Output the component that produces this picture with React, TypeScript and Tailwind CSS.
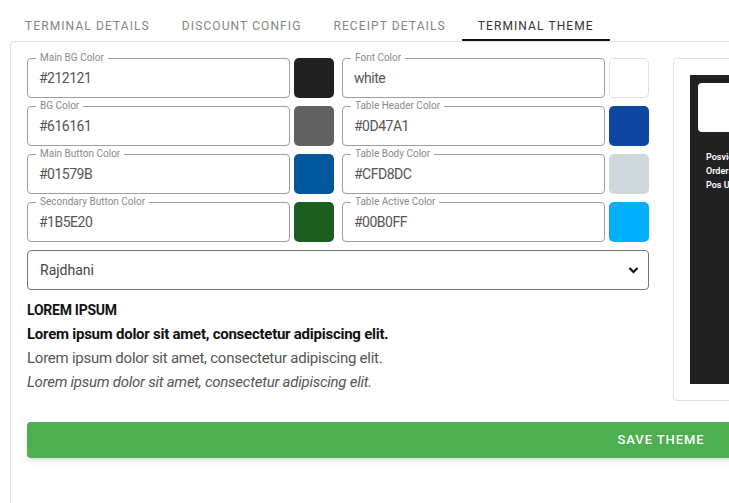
import React from "react";

const FONT = "font-['Roboto',sans-serif]";

const fields = [
  { label: "Main BG Color", value: "#212121", swatch: "bg-[#212121]" },
  { label: "Font Color", value: "white", swatch: "bg-white border border-[#e0e0e0]" },
  { label: "BG Color", value: "#616161", swatch: "bg-[#616161]" },
  { label: "Table Header Color", value: "#0D47A1", swatch: "bg-[#0D47A1]" },
  { label: "Main Button Color", value: "#01579B", swatch: "bg-[#01579B]" },
  { label: "Table Body Color", value: "#CFD8DC", swatch: "bg-[#CFD8DC]" },
  { label: "Secondary Button Color", value: "#1B5E20", swatch: "bg-[#1B5E20]" },
  { label: "Table Active Color", value: "#00B0FF", swatch: "bg-[#00B0FF]" },
];

const tabs = ["Terminal Details", "Discount Config", "Receipt Details", "Terminal Theme"];

const ColorField = ({ label, value, swatch }: { label: string; value: string; swatch: string }) => {
  return (
    <div className="flex gap-1">
      <div className="relative flex h-10 flex-1 items-center rounded-[4px] border border-[#9e9e9e] pl-[11px]">
        <span className="absolute -top-[7px] left-[8px] bg-white px-[4px] text-[10px] leading-[12px] text-[#8a8a8a]">
          {label}
        </span>
        <span className="text-[14px] tracking-[-0.5px] text-[#555]">{value}</span>
      </div>
      <div className={`h-10 w-10 rounded-[5px] ${swatch}`}></div>
    </div>
  );
};

const App = () => {
  return (
    <div className={`h-[503px] w-full overflow-hidden bg-white ${FONT}`}>
      <div className="w-[1320px] pl-[9px]">
        <div className="flex">
          {tabs.map((tab, i) => (
            <div
              key={tab}
              className={`border-b-2 px-4 pt-[19px] pb-[6px] text-[12px] leading-[14px] uppercase tracking-[1.1px] ${
                i === 3 ? "border-[#111] text-[#333]" : "border-transparent text-[#858585]"
              }`}
            >
              {tab}
            </div>
          ))}
        </div>

        <div className="ml-px w-[1302px] rounded-t-[4px] border border-[#e0e0e0] px-4 pt-4 pb-16">
          <div className="grid grid-cols-2 gap-6">
            <div>
              <div className="grid grid-cols-2 gap-2">
                {fields.map((f) => (
                  <ColorField key={f.label} {...f} />
                ))}
              </div>
              <div className="mt-2 flex h-10 items-center justify-between rounded-[4px] border border-[#777] pr-[9px] pl-3">
                <span className="text-[14px] text-[#444]">Rajdhani</span>
                <svg width="11" height="8" viewBox="0 0 11 8">
                  <path d="M1.5 2 L5.5 6 L9.5 2" fill="none" stroke="#111" strokeWidth="2.2" />
                </svg>
              </div>
              <div className="mt-2 text-[15px] leading-6 tracking-[-0.25px]">
                <p className="text-[14px] font-bold text-[#111]">LOREM IPSUM</p>
                <p className="font-bold text-[#111]">Lorem ipsum dolor sit amet, consectetur adipiscing elit.</p>
                <p className="text-[#555]">Lorem ipsum dolor sit amet, consectetur adipiscing elit.</p>
                <p className="italic text-[#555]">Lorem ipsum dolor sit amet, consectetur adipiscing elit.</p>
              </div>
            </div>

            <div className="h-[343px] rounded-[4px] border border-[#e0e0e0] p-4">
              <div className="h-full w-[420px] bg-[#212121] p-2">
                <div className="h-[49px] rounded-[4px] bg-white"></div>
                <div className="mt-[18px] px-2 text-[9px] leading-[14px] font-semibold text-white">
                  <p>Posview</p>
                  <p>Orders</p>
                  <p>Pos Utilities</p>
                </div>
              </div>
            </div>
          </div>

          <button
            type="button"
            className="mt-[21px] h-9 w-full rounded-[4px] bg-[#4CAF50] text-[13px] font-medium uppercase tracking-[0.9px] text-white shadow-md"
          >
            Save Theme
          </button>
        </div>
      </div>
    </div>
  );
};

export default App;
